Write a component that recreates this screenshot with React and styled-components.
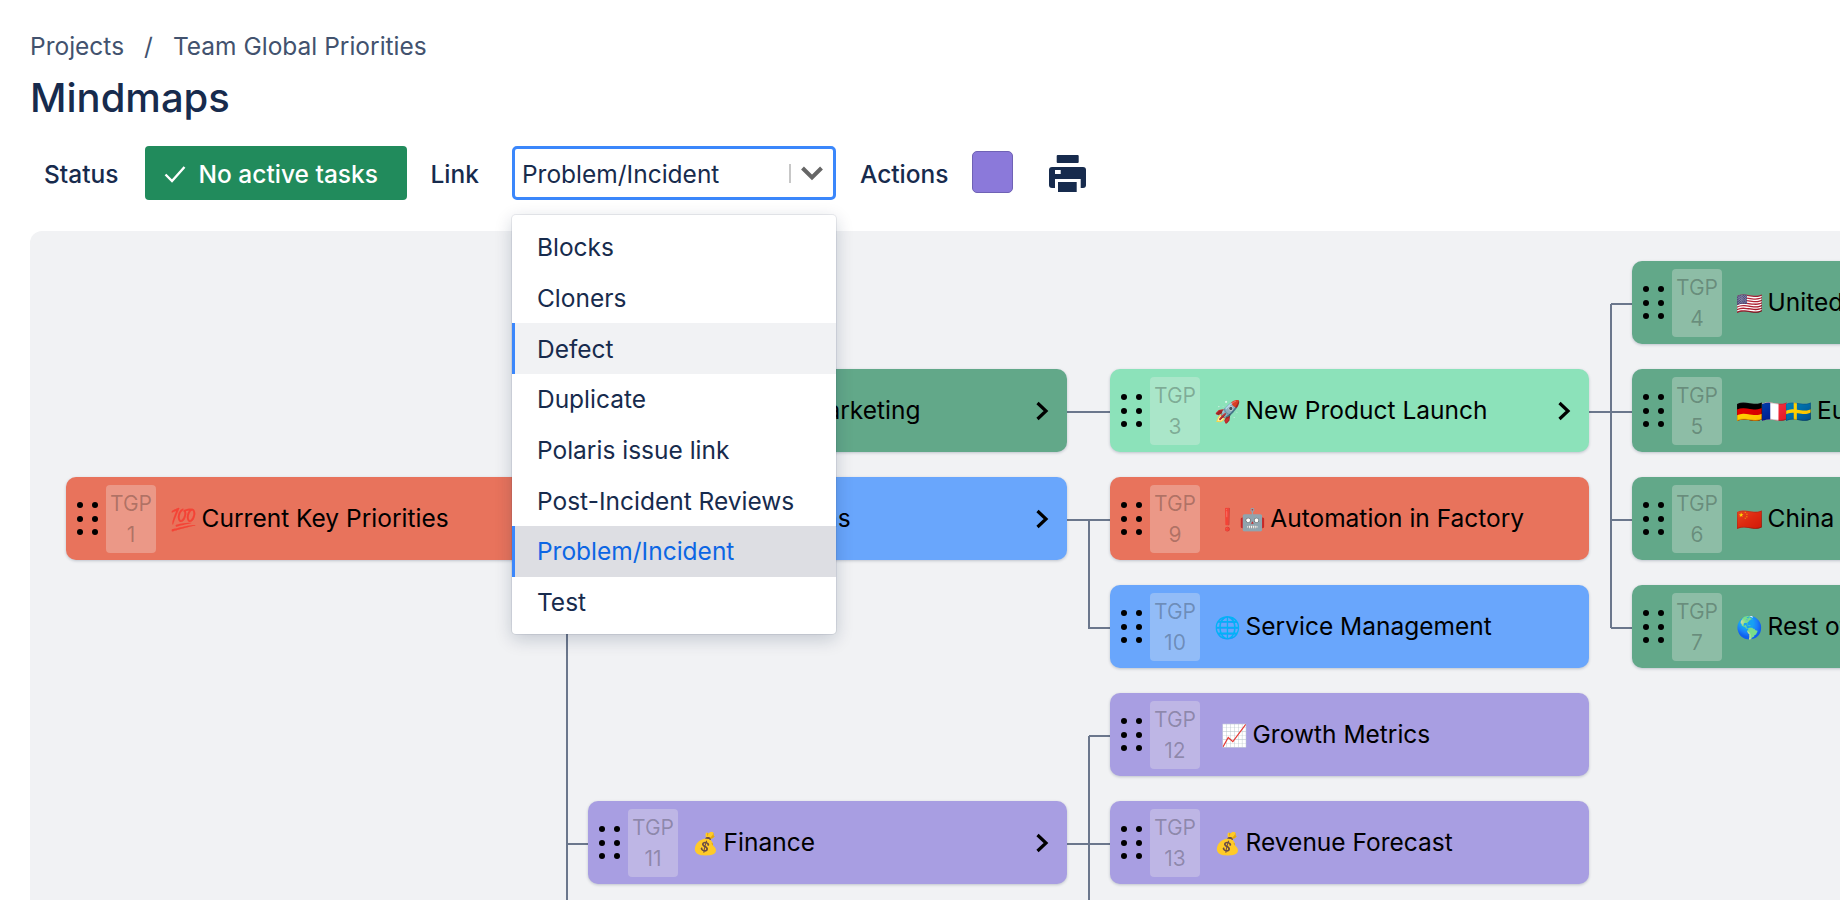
import React from 'react';
import styled, { createGlobalStyle } from 'styled-components';

const Global = createGlobalStyle`
  html, body { margin: 0; padding: 0; height: 900px; overflow: hidden; background: #fff; }
  body { font-family: Inter, "Noto Sans", "Liberation Sans", sans-serif; color: #172B4D; }
`;
const Page = styled.div`
  height: 900px; display: flex; flex-direction: column; padding: 30px 0 0 30px; box-sizing: border-box; overflow: hidden;
`;
const Crumbs = styled.nav`
  display: flex; align-items: center; gap: 20px; height: 32px; font-size: 24.5px; color: #42526E;
`;
const Title = styled.h1`
  margin: 9px 0 0; font-size: 40px; line-height: 54px; font-weight: 500; color: #172B4D;
`;
const Toolbar = styled.div`
  display: flex; align-items: center; height: 54px; margin-top: 21px; padding-left: 14px; position: relative; z-index: 5;
`;
const Label = styled.span`
  font-size: 24.5px; font-weight: 500; color: #172B4D; margin-right: ${p => p.$mr}px; padding-top: 2px;
`;
const StatusButton = styled.button`
  display: flex; align-items: center; gap: 12px; height: 54px; width: 262px; padding: 2px 0 0 19px; border: 0; border-radius: 4px;
  background: #218B5C; color: #fff; font: 500 24.5px Inter, sans-serif; margin-right: 23px; box-sizing: border-box; flex: none;
`;
const SelectWrap = styled.div`
  position: relative; width: 324px; height: 54px; margin-right: 24px; flex: none;
`;
const SelectBox = styled.div`
  height: 54px; box-sizing: border-box; border: 3px solid #3B87FB; border-radius: 5px; background: #fff;
  display: flex; align-items: center; padding-left: 7px; font-size: 24.5px; color: #172B4D;
`;
const SelectValue = styled.span` flex: 1; padding-top: 2px; `;
const Sep = styled.i` display: block; width: 2px; height: 19px; background: #c7c7c7; margin-right: 9px; `;
const Chevron = styled.svg` width: 24px; height: 16px; margin-right: 9px; display: block; `;
const Menu = styled.ul`
  position: absolute; top: 69px; left: 0; width: 324px; margin: 0; padding: 7px 0; list-style: none; background: #fff; border-radius: 4px;
  box-shadow: 0 0 0 1px rgba(9,30,66,.08), 0 5px 18px rgba(9,30,66,.2); box-sizing: border-box; height: 419px;
`;
const Item = styled.li`
  height: 50.67px; display: flex; align-items: center; font-size: 24.5px; padding-left: ${p => p.$bar ? 22 : 25}px;
  color: ${p => p.$sel ? '#0C66E4' : '#172B4D'};
  background: ${p => p.$sel ? '#DDDEE3' : p.$bar ? '#F1F2F4' : '#fff'};
  border-left: ${p => p.$bar ? '3px solid #3B87FB' : '0'};
`;
const Swatch = styled.div`
  width: 41px; height: 42px; border-radius: 5px; background: #8B79DA; border: 1px solid #6F62B5; box-sizing: border-box; margin: 0 36px 2px 0; flex: none;
`;
const PrintIcon = styled.svg` width: 37px; height: 37px; display: block; flex: none; `;
const Canvas = styled.div`
  position: relative; margin-top: 31px; flex: 1; background: #F1F2F4; border-radius: 12px 0 0 0; overflow: hidden;
`;
const Wires = styled.svg` position: absolute; left: 0; top: 0; width: 100%; height: 100%; `;
const Node = styled.div`
  position: absolute; width: 479px; height: 83px; box-sizing: border-box; display: flex; align-items: center; border-radius: 10px;
  background: ${p => p.$c}; box-shadow: 0 1px 3px rgba(9,30,66,.22); padding-left: 8px; color: #000; white-space: nowrap;
`;
const Grip = styled.div`
  display: grid; grid-template-columns: 6px 6px; column-gap: 9px; row-gap: 7.7px; margin-left: 3px; margin-right: 8px; width: 21px; flex: none;
  i { width: 6px; height: 6px; border-radius: 50%; background: #000; display: block; }
`;
const Key = styled.div`
  flex: none; width: 50px; height: 68px; border-radius: 4px; background: rgba(242,240,235,.3); display: flex; flex-direction: column; align-items: center; justify-content: center;
  font-size: 21px; line-height: 31px; color: rgba(0,0,0,.26);
`;
const NodeTitle = styled.div`
  flex: 1; font-size: 24.5px; padding: 0 0 2px ${p => p.$pad}px; overflow: hidden;
`;
const Emoji = styled.span` font-size: 21.5px; letter-spacing: -2.3px; `;
const Arrow = styled.svg` width: 14px; height: 20px; margin-right: 18px; flex: none; `;

const options = ['Blocks','Cloners','Defect','Duplicate','Polaris issue link','Post-Incident Reviews','Problem/Incident','Test'];
const COLORS = { red: '#E8735C', green: '#62A889', mint: '#8CE2BA', blue: '#69A6FC', purple: '#A89EE2' };
const oy = 231, X = [36, 558, 1080, 1602];
const nodes = [
  { k: 1, e: '💯', t: 'Current Key Priorities', c: 'red', col: 0, y: 477 },
  { k: 2, e: '🌍', t: 'Global Marketing', c: 'green', col: 1, y: 369, arrow: 1 },
  { k: 3, e: '🚀', t: 'New Product Launch', c: 'mint', col: 2, y: 369, arrow: 1 },
  { k: 4, e: '🇺🇸', t: 'United States', c: 'green', col: 3, y: 261 },
  { k: 5, e: '🇩🇪🇫🇷🇸🇪', t: 'Europe', c: 'green', col: 3, y: 369 },
  { k: 6, e: '🇨🇳', t: 'China', c: 'green', col: 3, y: 477 },
  { k: 7, e: '🌎', t: 'Rest of World', c: 'green', col: 3, y: 585 },
  { k: 8, e: '⚙️', t: 'Operations', c: 'blue', col: 1, y: 477, arrow: 1 },
  { k: 9, e: '❗🤖', t: 'Automation in Factory', c: 'red', col: 2, y: 477, pad: 14 },
  { k: 10, e: '🌐', t: 'Service Management', c: 'blue', col: 2, y: 585 },
  { k: 11, e: '💰', t: 'Finance', c: 'purple', col: 1, y: 801, arrow: 1 },
  { k: 12, e: '📈', t: 'Growth Metrics', c: 'purple', col: 2, y: 693, pad: 21 },
  { k: 13, e: '💰', t: 'Revenue Forecast', c: 'purple', col: 2, y: 801 },
];
const wires = [
  'M515 289 H537 M537 289 V669 M537 181 H558 M537 289 H558 M537 613 H558',
  'M1036 181 H1080',
  'M1036 289 H1080 M1059 289 V397 H1080',
  'M1036 613 H1080 M1059 505 V669 M1059 505 H1080',
  'M1558 181 H1602 M1581 73 V397 M1581 73 H1602 M1581 289 H1602 M1581 397 H1602',
];

export default function App() {
  return (
    <Page>
      <Global />
      <Crumbs><span>Projects</span><span>/</span><span>Team Global Priorities</span></Crumbs>
      <Title>Mindmaps</Title>
      <Toolbar>
        <Label $mr={27}>Status</Label>
        <StatusButton>
          <svg width="22" height="18" viewBox="0 0 22 18" fill="none"><path d="M1.5 9.5 L8 16 L20.5 2" stroke="#fff" strokeWidth="2.4"/></svg>
          No active tasks
        </StatusButton>
        <Label $mr={33}>Link</Label>
        <SelectWrap>
          <SelectBox>
            <SelectValue>Problem/Incident</SelectValue>
            <Sep />
            <Chevron viewBox="0 0 24 16" fill="none"><path d="M2.5 3 L12 12.5 L21.5 3" stroke="#666" strokeWidth="4"/></Chevron>
          </SelectBox>
          <Menu>
            {options.map(o => <Item key={o} $bar={o==='Defect'||o==='Problem/Incident'} $sel={o==='Problem/Incident'}>{o}</Item>)}
          </Menu>
        </SelectWrap>
        <Label $mr={23.5}>Actions</Label>
        <Swatch />
        <PrintIcon viewBox="0 0 37 37" aria-label="Print">
          <rect x="7.7" y="0" width="22" height="8" rx="1" fill="#172B4D" />
          <rect x="0" y="12" width="37" height="21" rx="3" fill="#172B4D" />
          <rect x="6" y="24" width="25.7" height="9" fill="#fff" />
          <rect x="9" y="27" width="18.7" height="10" fill="#172B4D" />
          <rect x="6" y="15" width="5.7" height="4" fill="#fff" />
        </PrintIcon>
      </Toolbar>
      <Canvas>
        <Wires><path d={wires.join(' ')} fill="none" stroke="#6B778C" strokeWidth="2" /></Wires>
        {nodes.map(n => (
          <Node key={n.k} $c={COLORS[n.c]} style={{ left: X[n.col], top: n.y - oy }}>
            <Grip>{[0,1,2,3,4,5].map(i => <i key={i} />)}</Grip>
            <Key><span>TGP</span><span>{n.k}</span></Key>
            <NodeTitle $pad={n.pad || 14}><Emoji>{n.e}</Emoji> {n.t}</NodeTitle>
            {n.arrow && <Arrow viewBox="0 0 14 20" fill="none"><path d="M2.5 2 L11 10 L2.5 18" stroke="#000" strokeWidth="3.2"/></Arrow>}
          </Node>
        ))}
      </Canvas>
    </Page>
  );
}
